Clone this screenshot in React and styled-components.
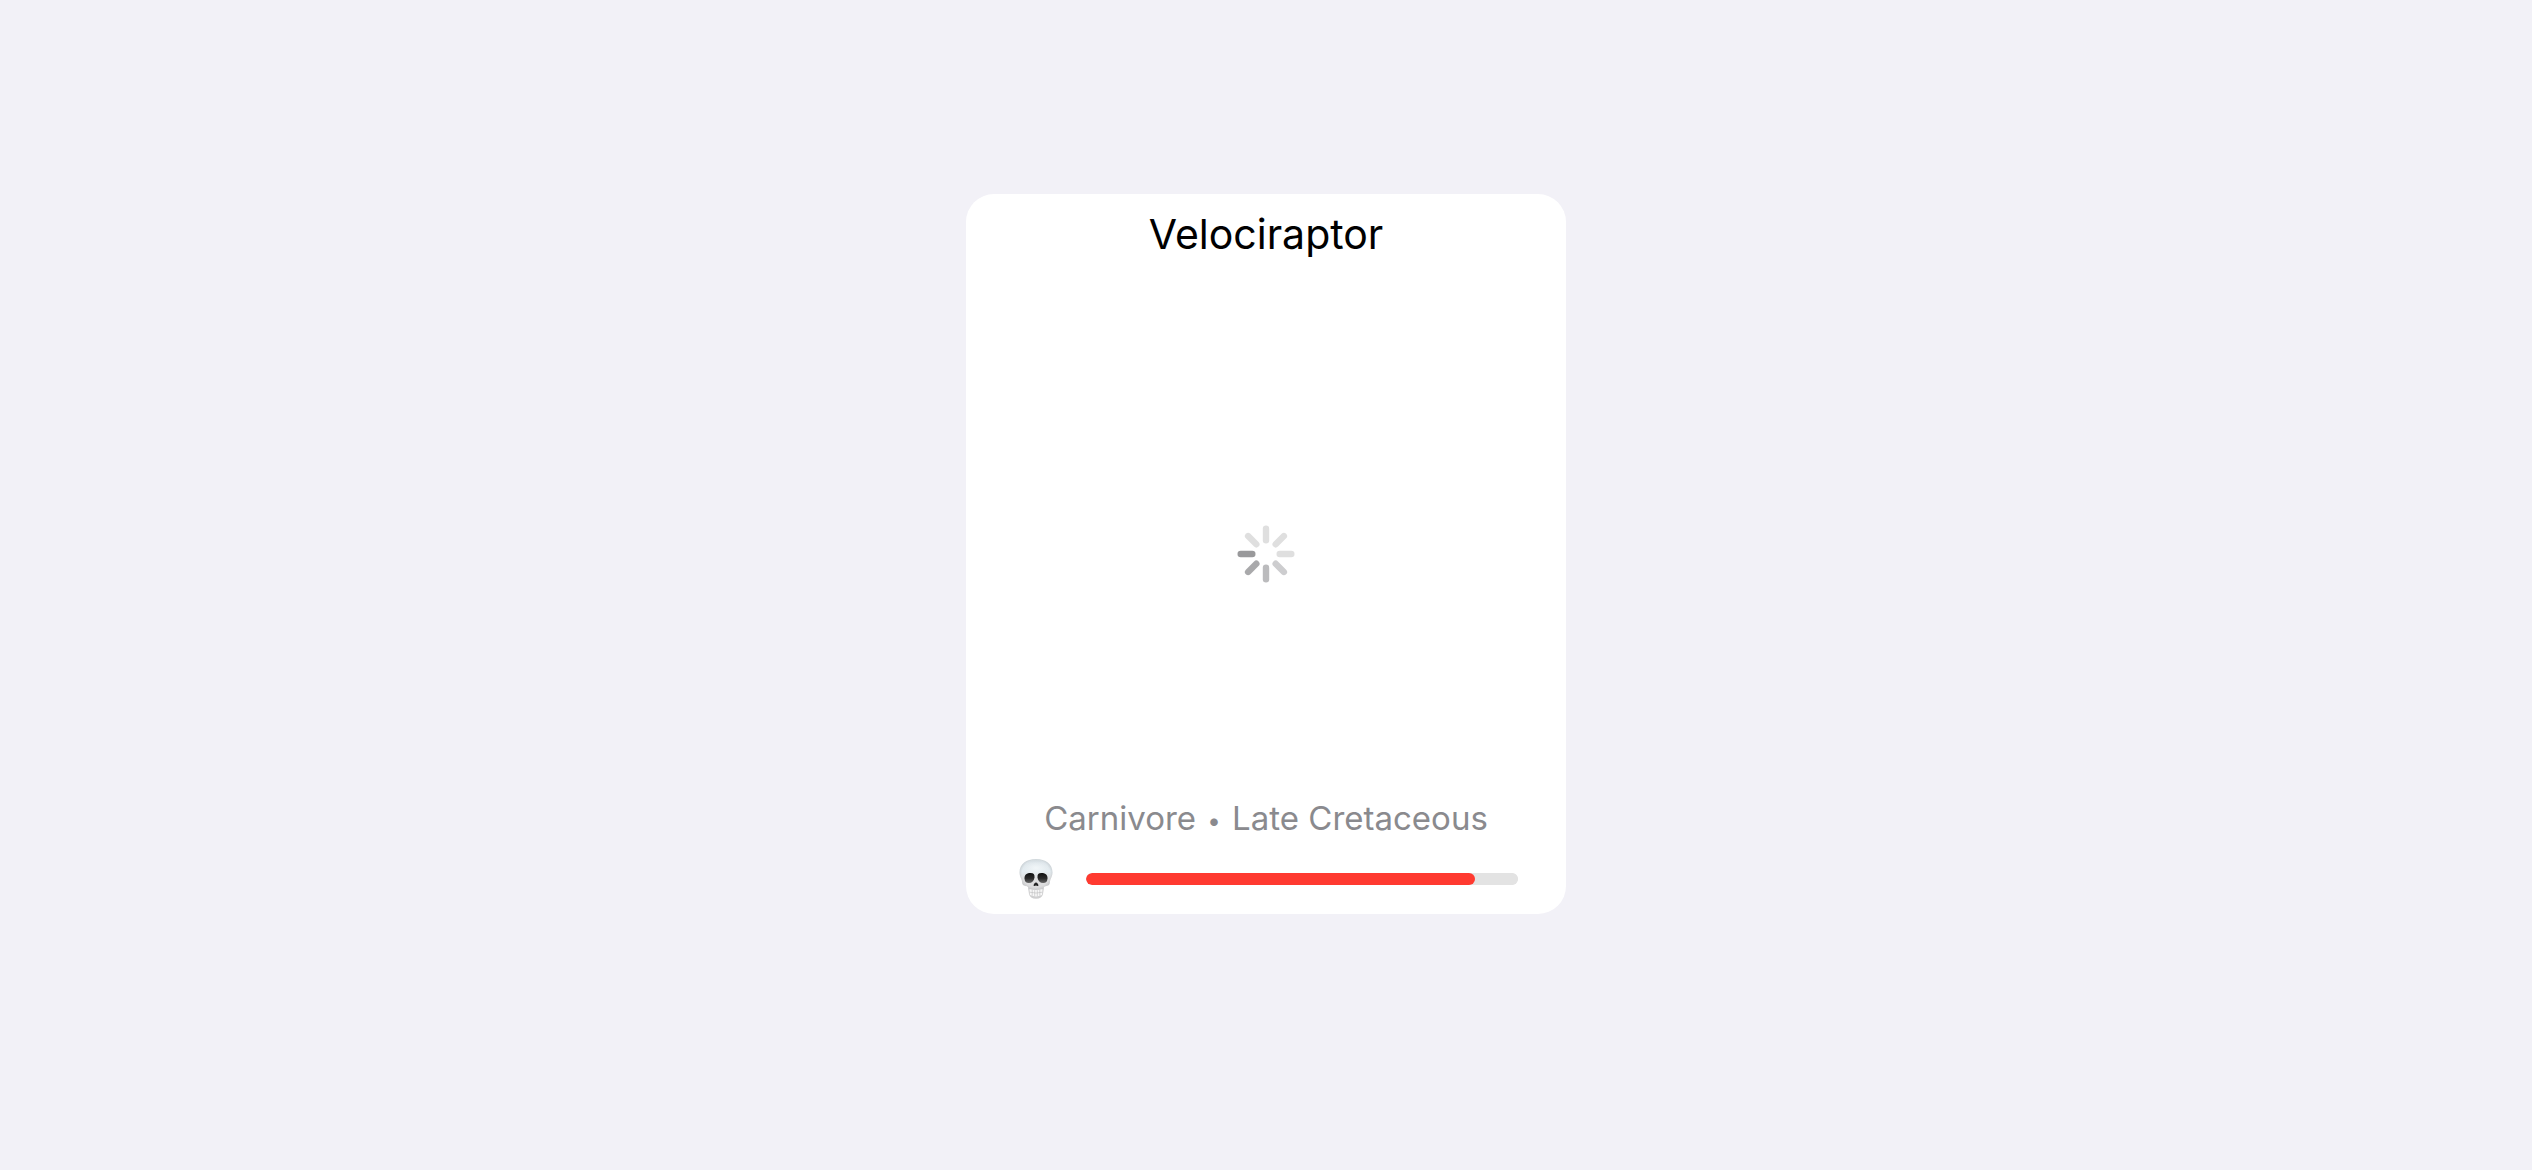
import React from "react";
import styled, { createGlobalStyle } from "styled-components";

const GlobalStyle = createGlobalStyle`
  *, *::before, *::after { box-sizing: border-box; }
  body {
    margin: 0;
    background: #f2f1f7;
    font-family: Inter, "Liberation Sans", sans-serif;
  }
`;

const Screen = styled.main`
  min-height: 100vh;
  padding-bottom: 62px;
  display: flex;
  align-items: center;
  justify-content: center;
`;

const Card = styled.article`
  width: 600px;
  max-width: 100%;
  aspect-ratio: 5 / 6;
  padding: 15px 48px 12px;
  border-radius: 28px;
  background: #ffffff;
  display: flex;
  flex-direction: column;
`;

const Title = styled.h1`
  margin: 0;
  font-size: 41px;
  font-weight: 400;
  line-height: 50px;
  text-align: center;
  color: #000000;
`;

const Picture = styled.div`
  flex: 1;
  padding-top: 50px;
  display: flex;
  align-items: center;
  justify-content: center;
`;

const Details = styled.p`
  margin: 0;
  font-size: 33px;
  font-weight: 400;
  line-height: 40px;
  text-align: center;
  color: #8a8a8e;
`;

const Dot = styled.span`
  margin: 0 2px;
  font-size: 24px;
  line-height: 1;
  vertical-align: middle;
`;

const Danger = styled.label`
  margin-top: 18px;
  height: 46px;
  display: flex;
  align-items: center;
  gap: 28px;
`;

const Meter = styled.progress`
  appearance: none;
  flex: 1;
  min-width: 0;
  height: 12px;
  border: 0;
  border-radius: 6px;
  overflow: hidden;
  background: #e3e3e3;

  &::-webkit-progress-bar {
    border-radius: 6px;
    background: #e3e3e3;
  }
  &::-webkit-progress-value {
    border-radius: 6px;
    background: #ff3a30;
  }
`;

const SPOKES = [
  "#dfdfdf", "#dfdfdf", "#dfdfdf", "#cdcdcf",
  "#bbbbbd", "#a9a9ab", "#99999b", "#dfdfdf",
];

const CRANIUM =
  "M22 1 C31.5 1 38.5 6 38.5 14.5 C38.5 18 37 19.8 36.3 22 C35.7 24 36.2 26.2 34.5 27.3 C33 28.3 30.3 27.8 29.7 29.8 C29.2 31.7 29.4 33.5 22 33.5 C14.6 33.5 14.8 31.7 14.3 29.8 C13.7 27.8 11 28.3 9.5 27.3 C7.8 26.2 8.3 24 7.7 22 C7 19.8 5.5 18 5.5 14.5 C5.5 6 12.5 1 22 1Z";

function Spinner() {
  return (
    <svg width="58" height="58" viewBox="-29 -29 58 58" role="img" aria-label="Loading">
      {SPOKES.map((color, i) => (
        <rect key={i} x="-3.2" y="-28.5" width="6.4" height="18" rx="3.2"
          fill={color} transform={`rotate(${i * 45})`} />
      ))}
    </svg>
  );
}

function Skull() {
  return (
    <svg width="44" height="42" viewBox="0 0 44 42" role="img" aria-label="Danger">
      <defs>
        <linearGradient id="bone" x1="0" y1="0" x2="0" y2="1">
          <stop offset="0" stopColor="#d2dade" />
          <stop offset="0.12" stopColor="#dde5ea" />
          <stop offset="0.38" stopColor="#e5edf1" />
          <stop offset="0.62" stopColor="#dededf" />
          <stop offset="1" stopColor="#dadadb" />
        </linearGradient>
        <radialGradient id="shine">
          <stop offset="0" stopColor="#f1f6f8" />
          <stop offset="1" stopColor="#f1f6f8" stopOpacity="0" />
        </radialGradient>
        <radialGradient id="edge" cx="0.5" cy="0.45" r="0.56">
          <stop offset="0.75" stopColor="#999da0" stopOpacity="0" />
          <stop offset="1" stopColor="#8f9396" stopOpacity="0.45" />
        </radialGradient>
        <linearGradient id="socket" x1="0" y1="0" x2="0" y2="1">
          <stop offset="0" stopColor="#111111" />
          <stop offset="0.55" stopColor="#2c2c2c" />
          <stop offset="1" stopColor="#666666" />
        </linearGradient>
      </defs>
      <path d="M14.5 28 L29.5 28 Q30 32 29 36 Q28 40.6 22 40.8 Q16 40.6 15 36 Q14 32 14.5 28Z" fill="#cfcfd0" />
      <path d={CRANIUM} fill="url(#bone)" />
      <path d={CRANIUM} fill="url(#edge)" />
      <ellipse cx="22" cy="10" rx="13" ry="7" fill="url(#shine)" />
      <path d="M10.5 20.5 C10.3 16.5 13 15 16.5 15 C19.6 15 20.8 16.3 20.5 19.5 C20.1 23 18 25 14.8 25 C12 25 10.7 23.5 10.5 20.5Z" fill="url(#socket)" />
      <path d="M33.5 20.5 C33.7 16.5 31 15 27.5 15 C24.4 15 23.2 16.3 23.5 19.5 C23.9 23 26 25 29.2 25 C32 25 33.3 23.5 33.5 20.5Z" fill="url(#socket)" />
      <path d="M22 24.6 C23 24.6 24.5 26.6 24.4 27.5 C24.3 28.3 22.8 28 22 27.5 C21.2 28 19.7 28.3 19.6 27.5 C19.5 26.6 21 24.6 22 24.6Z" fill="#242424" />
      <path d="M15.4 31 Q22 33 28.6 31 L28 37 Q22 39.8 16 37Z" fill="#f7f7f7" />
      <path d="M15.6 34.2 Q22 35.9 28.4 34.2 M18.2 31.8 V37.6 M20.7 32.2 V38.2 M23.3 32.2 V38.2 M25.8 31.8 V37.6" fill="none" stroke="#bcbcbd" strokeWidth="0.6" />
    </svg>
  );
}

export default function App() {
  return (
    <>
      <GlobalStyle />
      <Screen>
        <Card>
          <Title>Velociraptor</Title>
          <Picture><Spinner /></Picture>
          <Details>Carnivore <Dot>•</Dot> Late Cretaceous</Details>
          <Danger>
            <Skull />
            <Meter max="100" value="90" />
          </Danger>
        </Card>
      </Screen>
    </>
  );
}
